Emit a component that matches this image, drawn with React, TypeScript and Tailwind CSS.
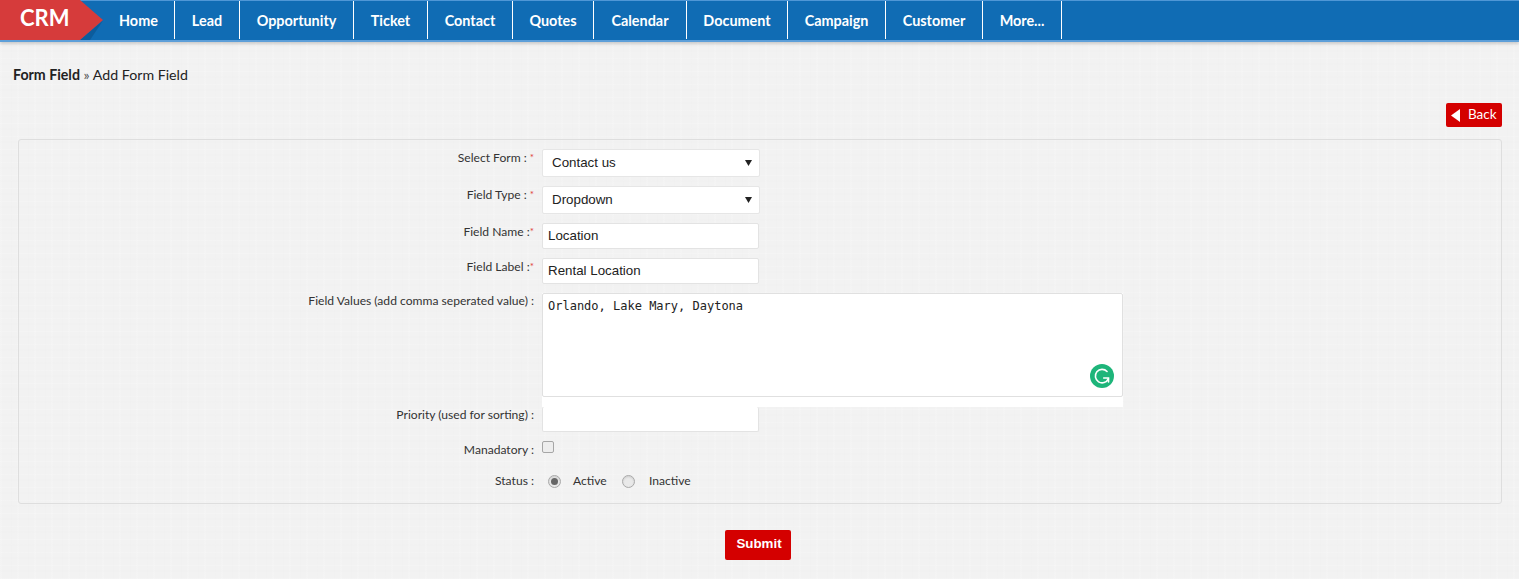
const items = [
  ["Home", "w-[92px] pl-[36px] justify-start"], ["Lead", "w-[65px] justify-center"], ["Opportunity", "w-[114px] justify-center"], ["Ticket", "w-[74px] justify-center"],
  ["Contact", "w-[85px] justify-center"], ["Quotes", "w-[81px] justify-center"], ["Calendar", "w-[93px] justify-center"], ["Document", "w-[101px] justify-center"],
  ["Campaign", "w-[98px] justify-center"], ["Customer", "w-[97px] justify-center"], ["More...", "w-[79px] justify-center"],
];

function Label({ children, req, tight, className = "" }: { children: string; req?: boolean; tight?: boolean; className?: string }) {
  return (
    <div className={`w-[515px] text-right text-[12.1px] leading-[16px] text-[#333] ${className}`}>
      {children}
      {req && <span className={`text-[#e0403c] text-[10px] align-[1px] ${tight ? "ml-0" : "ml-[3px]"}`}>*</span>}
    </div>
  );
}

function Select({ value, className }: { value: string; className: string }) {
  return (
    <div className={`w-[218px] h-[28px] bg-white border border-[#e6e6e6] rounded-[2px] flex items-center justify-between pl-[9px] pr-[6px] font-['Liberation_Sans'] text-[13.33px] text-[#222] ${className}`}>
      <span>{value}</span>
      <svg width="7" height="6" viewBox="0 0 7 6" className="mr-[1px]"><path d="M0 0h7L3.5 6z" fill="#222" /></svg>
    </div>
  );
}

function TextBox({ value = "", className = "" }: { value?: string; className?: string }) {
  return (
    <div className={`w-[217px] h-[26px] bg-white border border-[#e3e3e3] rounded-[2px] flex items-center pl-[5px] font-['Liberation_Sans'] text-[13.33px] text-[#222] ${className}`}>
      {value}
    </div>
  );
}

function Radio({ on }: { on?: boolean }) {
  return (
    <span className="w-[13px] h-[13px] rounded-full border border-[#a9a9a9] bg-[#e9e9e9] flex items-center justify-center shadow-[inset_0_1px_2px_rgba(0,0,0,0.12)]">
      {on && <span className="w-[7px] h-[7px] rounded-full bg-[#666]" />}
    </span>
  );
}

export default function App() {
  return (
    <div className="w-[1519px] h-[579px] overflow-hidden font-['Lato',sans-serif] bg-[#f2f2f2] bg-[repeating-linear-gradient(0deg,rgba(255,255,255,0.14)_0_1px,transparent_1px_7px,rgba(0,0,0,0.004)_7px_9px,transparent_9px_13px),repeating-linear-gradient(90deg,rgba(255,255,255,0.12)_0_2px,transparent_2px_11px,rgba(0,0,0,0.004)_11px_12px,transparent_12px_17px)]">
      <header className="relative h-[42px] bg-[#106cb4] border-t border-t-[#4f97d6] border-b-2 border-b-[#5d9fd9] flex shadow-[0_2px_3px_rgba(0,0,0,0.16)]">
        <div className="w-[80px] h-[40px] -mt-[1px] bg-[#d63b3b] flex items-center pl-[20px] pb-[5px] text-[22px] font-bold text-white leading-none">
          CRM
        </div>
        <svg className="absolute left-[80px] -top-[1px]" width="24" height="41" viewBox="0 0 24 41">
          <path d="M0 40 L23 20.5 L10 40z" fill="#0c5c9c" />
          <path d="M0 0 L23 20 L0 40z" fill="#d63b3b" />
        </svg>
        <nav className="ml-[3px] flex h-[38px]">
          {items.map(([t, w]) => (
            <div key={t} className={`${w} h-[38px] pt-[2px] flex items-center border-r border-r-white text-[14.4px] font-bold text-white`}>
              {t}
            </div>
          ))}
        </nav>
      </header>

      <div className="mt-[23px] pl-[13px] text-[14.2px] leading-[20px] text-[#222]">
        <b className="font-bold">Form Field</b> <span className="text-[#555]">»</span> Add Form Field
      </div>

      <div className="mt-[18px] pr-[17px] flex justify-end">
        <div className="w-[56px] h-[24px] bg-[#d40000] rounded-[2px] flex items-center pl-[4px] pb-[2px] gap-[7px] text-white text-[13.5px]">
          <svg width="11" height="13" viewBox="0 0 11 13" className="mt-[2px]"><path d="M10 0v13L1 6.5z" fill="#fff" /></svg>
          Back
        </div>
      </div>

      <div className="mt-[12px] ml-[18px] w-[1484px] h-[365px] border border-[#dedede] rounded-[3px]">
        <div className="flex flex-col pt-[9px]">
          <div className="flex h-[28px]">
            <Label req>Select Form :</Label>
            <Select value="Contact us" className="ml-[8px]" />
          </div>
          <div className="flex h-[28px] mt-[9px]">
            <Label req>Field Type :</Label>
            <Select value="Dropdown" className="ml-[8px]" />
          </div>
          <div className="flex h-[26px] mt-[9px]">
            <Label req tight>Field Name :</Label>
            <TextBox value="Location" className="ml-[8px]" />
          </div>
          <div className="flex h-[26px] mt-[9px]">
            <Label req tight>Field Label :</Label>
            <TextBox value="Rental Location" className="ml-[8px]" />
          </div>
          <div className="flex mt-[9px]">
            <Label>Field Values (add comma seperated value) :</Label>
            <div className="ml-[8px] w-[581px] h-[114px] bg-white">
              <div className="relative h-[104px] border border-[#e0e0e0] rounded-[2px] pl-[5px] pt-[4px] font-['DejaVu_Sans_Mono','Liberation_Mono',monospace] text-[12px] leading-[16px] text-[#222]">
                Orlando, Lake Mary, Daytona
                <div className="absolute right-[8px] bottom-[8px] w-[24px] h-[24px] rounded-full bg-[#1eb57a] flex items-center justify-center">
                  <svg width="18" height="18" viewBox="0 0 16 16" fill="none" stroke="#fff" strokeWidth="1.4" strokeLinecap="round">
                    <path d="M12.5 4 A6 6 0 1 0 13.6 10.5" />
                    <path d="M9.5 9.8 H13.8 V13.4" />
                  </svg>
                </div>
              </div>
            </div>
          </div>
          <div className="flex h-[25px]">
            <Label>Priority (used for sorting) :</Label>
            <TextBox className="ml-[8px] !h-[25px] border-t-0" />
          </div>
          <div className="flex h-[14px] mt-[9px]">
            <Label className="pt-[1px]">Manadatory :</Label>
            <span className="ml-[8px] w-[12px] h-[12px] rounded-[2px] border border-[#a6a6a6] bg-[#ededed]" />
          </div>
          <div className="flex items-center h-[16px] mt-[18px]">
            <Label>Status :</Label>
            <div className="ml-[14px] flex items-center text-[12.1px] text-[#333]">
              <Radio on />
              <span className="ml-[12px] w-[37px]">Active</span>
              <span className="ml-[12px]"><Radio /></span>
              <span className="ml-[14px]">Inactive</span>
            </div>
          </div>
        </div>
      </div>

      <div className="mt-[26px] flex justify-center pr-[3px]">
        <div className="w-[66px] h-[30px] bg-[#d40000] rounded-[2px] flex items-center justify-center pl-[2px] pb-[3px] font-['Liberation_Sans'] text-[13.33px] font-bold text-white">
          Submit
        </div>
      </div>
    </div>
  );
}
